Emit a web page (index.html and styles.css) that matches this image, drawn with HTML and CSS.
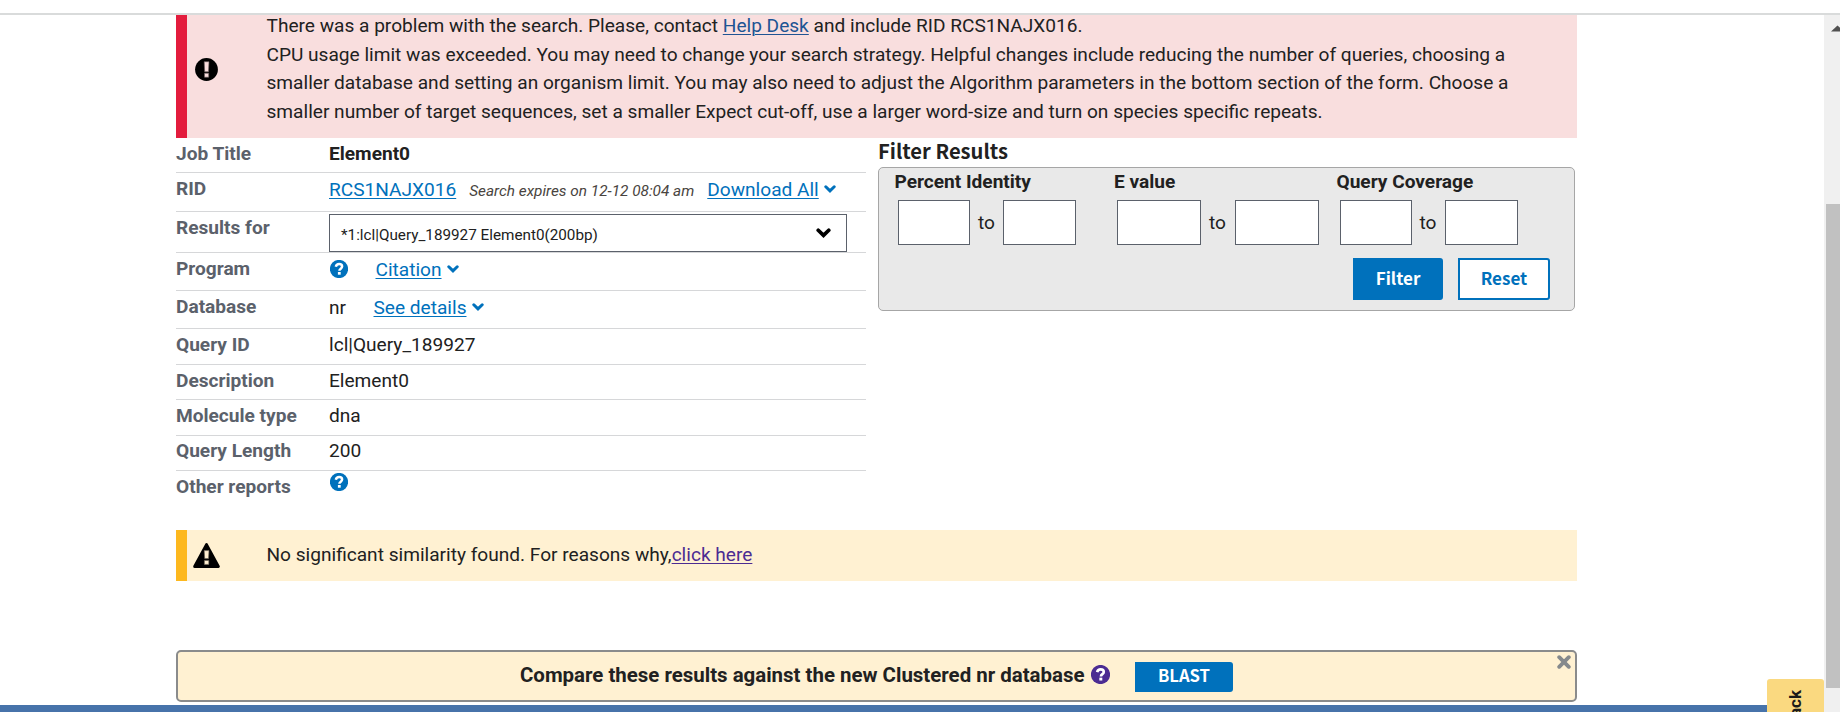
FILE: index.html
```html
<!DOCTYPE html>
<html lang="en">
<head>
<meta charset="utf-8">
<title>BLAST Results</title>
<link rel="stylesheet" href="styles.css">
</head>
<body>
<svg class="defs" width="0" height="0" aria-hidden="true">
  <symbol id="chevron" viewBox="0 0 12 8"><path d="M1.8 1.8 6 5.900 10.200 1.800" fill="none" stroke="currentColor" stroke-width="3" stroke-linecap="round"/></symbol>
  <symbol id="help" viewBox="0 0 18 18"><circle cx="9" cy="9" r="9.1" fill="currentColor"/><path d="M5.800 6.700C6.300 4.700 7.500 4.100 9.100 4.100c1.900 0 3 1 3 2.500 0 2.100-2.700 2-2.700 4.200" fill="none" stroke="#fff" stroke-width="2.500"/><rect x="7.900" y="12" width="2.800" height="2.700" fill="#fff"/></symbol>
</svg>
<div class="topbar"></div>
<div class="view">
  <main class="content">
    <section class="alert alert-error">
      <svg class="alert-icon" width="23" height="23" viewBox="0 0 23 23"><circle cx="11.5" cy="11.5" r="11.4"/><path d="M9.2 3.700h4.800l-.5 10H9.700zM9.500 15.200h4.200v4H9.500z" fill="#f9dede" stroke="#6b6060" stroke-width=".6"/></svg>
      <p class="alert-text">There was a problem with the search. Please, contact <a class="help-link" href="#">Help Desk</a> and include RID RCS1NAJX016.<br>CPU usage limit was exceeded. You may need to change your search strategy. Helpful changes include reducing the number of queries, choosing a<br>smaller database and setting an organism limit. You may also need to adjust the Algorithm parameters in the bottom section of the form. Choose a<br>smaller number of target sequences, set a smaller Expect cut-off, use a larger word-size and turn on species specific repeats.</p>
    </section>

    <div class="columns">
      <dl class="summary">
        <div class="row h35"><dt>Job Title</dt><dd class="strong">Element0</dd></div>
        <div class="row h39"><dt>RID</dt><dd class="low"><a href="#">RCS1NAJX016</a><em class="expires">Search expires on 12-12 08:04 am</em><a href="#">Download All</a><svg class="chev" width="12" height="8"><use href="#chevron"/></svg></dd></div>
        <div class="row h41"><dt>Results for</dt><dd class="select-cell"><div class="select"><span>*1:lcl|Query_189927 Element0(200bp)</span><svg width="15" height="10"><use href="#chevron"/></svg></div></dd></div>
        <div class="row h38"><dt>Program</dt><dd class="low"><svg class="help help-program" width="18" height="18"><use href="#help"/></svg><a href="#">Citation</a><svg class="chev" width="12" height="8"><use href="#chevron"/></svg></dd></div>
        <div class="row h38"><dt>Database</dt><dd class="low"><span class="db">nr</span><a href="#">See details</a><svg class="chev" width="12" height="8"><use href="#chevron"/></svg></dd></div>
        <div class="row h36"><dt>Query ID</dt><dd>lcl|Query_189927</dd></div>
        <div class="row h35"><dt>Description</dt><dd>Element0</dd></div>
        <div class="row h36"><dt>Molecule type</dt><dd>dna</dd></div>
        <div class="row h35 length"><dt>Query Length</dt><dd>200</dd></div>
        <div class="row last"><dt>Other reports</dt><dd><svg class="help help-reports" width="18" height="18"><use href="#help"/></svg></dd></div>
      </dl>

      <section class="filters">
        <h2>Filter Results</h2>
        <div class="panel">
          <div class="fields">
            <div class="field identity"><label>Percent Identity</label><div class="range"><input type="text"><span>to</span><input type="text"></div></div>
            <div class="field evalue"><label>E value</label><div class="range"><input type="text"><span>to</span><input type="text"></div></div>
            <div class="field coverage"><label>Query Coverage</label><div class="range"><input type="text"><span>to</span><input type="text"></div></div>
          </div>
          <div class="actions"><button class="btn primary">Filter</button><button class="btn outline">Reset</button></div>
        </div>
      </section>
    </div>

    <section class="alert alert-warning">
      <svg class="alert-icon" width="27" height="25" viewBox="0 0 27 25"><path d="M13.5 1.6 25.3 23.4H1.7z" stroke="#000" stroke-width="3" stroke-linejoin="round"/><path d="M11.2 7.6h4.800l-.5 8h-3.800zM11.400 17.400h4.400v4h-4.400z" fill="#ffefd0" stroke="#6b6458" stroke-width=".6"/></svg>
      <p class="alert-text">No significant similarity found. For reasons why,<a class="visited" href="#">click here</a></p>
    </section>

    <section class="compare">
      <span class="compare-text">Compare these results against the new Clustered nr database</span>
      <svg class="help help-visited" width="19" height="19" viewBox="0 0 18 18"><use href="#help"/></svg>
      <button class="btn blast">BLAST</button>
      <svg class="close" width="14" height="14" viewBox="0 0 14 14"><path d="M2.2 2.2 11.8 11.8M11.8 2.2 2.2 11.8"/></svg>
    </section>
  </main>
  <div class="scrollbar"><svg width="16" height="15" viewBox="0 0 16 15"><path d="M7 15.500 13.500 9.500 20 15.500z"/></svg><div class="thumb"></div></div>
</div>
<div class="footer-bar"></div>
<div class="feedback"><span>Feedback</span></div>
</body>
</html>
```
FILE: styles.css
```css
* { box-sizing: border-box; }
html, body { margin: 0; height: 712px; overflow: hidden; }
body { position: relative; display: flex; flex-direction: column; background: #fff; color: #212121; font: 19.1px/28px Roboto, "Liberation Sans", sans-serif; }
p, dl, dd, h2 { margin: 0; }
a { color: #0071bc; text-decoration: underline; text-decoration-thickness: 1px; text-underline-offset: 2px; }
svg { display: block; flex: none; }
.defs { position: absolute; }

.topbar { flex: none; height: 15px; border-bottom: 2px solid #d9dbdb; }
.view { display: flex; justify-content: space-between; height: 697px; flex: none; }
.content { width: 1401px; margin-left: 176px; }

.alert { display: flex; border-left: 11px solid #e31c3d; }
.alert-error { height: 123px; background: #f9dede; }
.alert-error .alert-icon { margin: 43px 0 0 8px; }
.alert-error .alert-text { margin: -3px 0 0 48.500px; line-height: 28.65px; white-space: nowrap; }
.help-link { color: #205493; }
.visited { color: #4c2c92; }

.columns { display: flex; height: 392px; }
.summary { width: 690px; margin-right: 12px; }
.row { display: flex; border-bottom: 1px solid #d6d7d9; }
.h35 { height: 35px; }
.h36 { height: 36px; }
.h38 { height: 38px; }
.h39 { height: 39px; }
.h41 { height: 41px; }
.last { border-bottom: 0; }
dt { width: 153px; padding-top: 2px; color: #5b616b; font-weight: 700; white-space: nowrap; }
dd { display: flex; padding-top: 2px; white-space: nowrap; }
dd.low { padding-top: 3px; }
.length dt, .length dd { padding-top: 1px; }
dd.strong { font-weight: 700; }
.expires { margin: 0 13px; color: #494440; font-size: 15.36px; line-height: 30px; }
.chev { margin: 9px 0 0 5.500px; color: #0071bc; }
.help { color: #0071bc; }
.help-program { margin: 4px 27.500px 0 1px; }
.help-reports { margin: 0 0 0 1px; }
.db { width: 44.500px; }
.select { display: flex; justify-content: space-between; width: 518px; height: 38px; padding: 0 15px 0 11px; border: 1px solid #5b616b; background: #fff; font-size: 15.26px; line-height: 40px; color: #212121; }
.select svg { margin-top: 13px; color: #000; }

.filters { width: 697px; }
h2 { height: 29px; padding: 1px 0 0; font: 700 20.15px/24.500px "Noto Sans CJK SC", "Noto Sans", sans-serif; }
.panel { height: 144px; padding: 0 24px 0 15.500px; border: 1px solid #a6a6a6; border-radius: 5px; background: #e9e9e9; }
.fields { display: flex; }
.field label { display: block; line-height: 27px; font-weight: 700; white-space: nowrap; }
.identity { width: 219.500px; }
.evalue { width: 222.500px; }
.range { display: flex; margin: 5px 0 0 3px; line-height: 45px; }
.identity .range { margin-left: 3.500px; }
.range input { width: 72px; height: 45px; padding: 0; border: 1px solid #5b616b; border-radius: 0; background: #fff; }
.range input:last-child { width: 73px; }
.range span { width: 33px; padding-left: 8px; }
.evalue .range input { width: 84px; }
.evalue .range span { width: 34px; }
.actions { display: flex; justify-content: flex-end; gap: 15px; margin-top: 13px; }
.btn { padding: 0 0 2px; border: 2px solid #0071bc; border-radius: 0 3px 3px 0; color: #fff; background: #0071bc; font: 700 17px/34px "Noto Sans CJK SC", "Noto Sans", sans-serif; }
.primary { width: 90px; height: 42px; }
.outline { width: 92px; height: 42px; color: #0071bc; background: #fff; }

.alert-warning { height: 51px; border-left-color: #fdb81e; background: #fff1d2; }
.alert-warning .alert-icon { margin: 13px 0 0 6px; }
.alert-warning .alert-text { margin: 11px 0 0 46.500px; }

.compare { position: relative; display: flex; height: 52px; margin-top: 69px; padding-left: 342px; border: 2px solid #8a8b8c; border-radius: 5px; background: #fff1d2; }
.compare-text { width: 571px; padding-top: 9px; font-weight: 700; font-size: 20.44px; white-space: nowrap; }
.help-visited { margin-top: 13px; color: #4c2c92; }
.blast { width: 98px; height: 30px; margin: 10px 0 0 25px; padding: 0 0 3px; border: 0; font-size: 16.66px; line-height: 25.500px; }
.close { position: absolute; top: 3px; right: 4.500px; fill: none; stroke: #85898c; stroke-width: 3.8; stroke-linecap: round; }

.scrollbar { width: 16px; padding-left: 2px; background: #f0f0f0; }
.scrollbar svg { height: 17px; width: 16px; margin-left: -2px; fill: #505050; }
.thumb { height: 484px; margin-top: 172px; background: #c1c1c1; }

.footer-bar { position: absolute; left: 0; bottom: 0; width: 1824px; height: 7px; background: #4773aa; }
.feedback { position: absolute; left: 1767px; top: 679px; width: 57px; height: 33px; overflow: hidden; border-radius: 3px 3px 0 0; background: #fad980; }
.feedback span { position: absolute; left: 17px; top: 11px; writing-mode: vertical-rl; transform: rotate(180deg); color: #1b1b1b; font: 700 17px/22px Roboto, sans-serif; }
```
